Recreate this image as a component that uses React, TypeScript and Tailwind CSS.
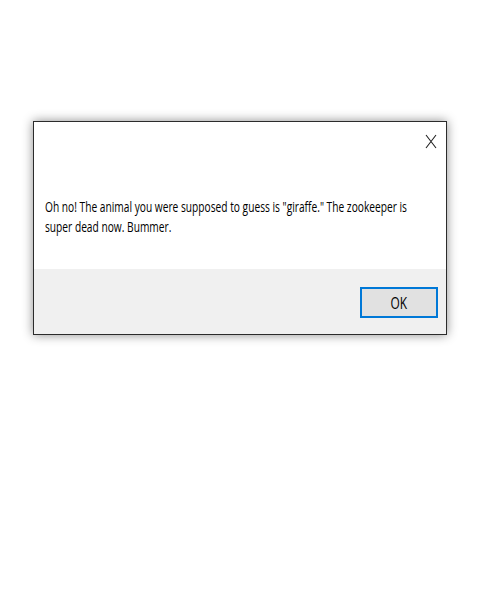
export default function App() {
  return (
    <div className="w-[482px] h-[597px] bg-white pt-[121px] pl-[33px]">
      <div className="w-[414px] h-[214px] border border-[#2b2b2b] bg-white flex flex-col shadow-[0_0_10px_rgba(0,0,0,0.45)] font-['Open_Sans',sans-serif]">
        <div className="flex-1 flex flex-col bg-white">
          <div className="flex justify-end pr-[8px] pt-[12px]">
            <svg width="12" height="15" viewBox="0 0 12 15" className="mr-[1px]">
              <path d="M1 1 L11 14 M11 1 L1 14" stroke="#222" strokeWidth="1.1" fill="none" />
            </svg>
          </div>
          <p className="ml-[11px] w-[550px] origin-left scale-x-[0.68] mt-[47px] text-[15px] leading-[20px] text-black">
            Oh no! The animal you were supposed to guess is "giraffe." The zookeeper is super dead now. Bummer.
          </p>
        </div>
        <div className="h-[65px] bg-[#f0f0f0] flex justify-end items-start pt-[18px] pr-[8px]">
          <button className="w-[78px] h-[31px] border-2 border-[#0078d7] bg-[#e1e1e1] flex items-center justify-center">
            <span className="scale-x-[0.7] text-[17px] text-black">OK</span>
          </button>
        </div>
      </div>
    </div>
  );
}
